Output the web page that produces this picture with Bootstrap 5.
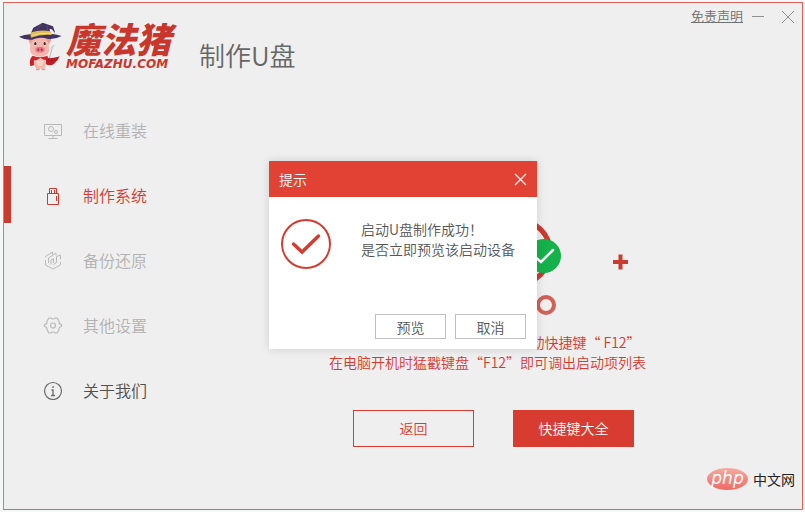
<!DOCTYPE html>
<html lang="zh-CN">
<head>
<meta charset="utf-8">
<meta name="viewport" content="width=device-width, initial-scale=1">
<title>魔法猪 - 制作U盘</title>
<link href="https://cdn.jsdelivr.net/npm/bootstrap@5.3.0/dist/css/bootstrap.min.css" rel="stylesheet">
<style>
  body { background: #f6f7f7; color: #555; font: 350 14px/20px "Noto Sans CJK SC", sans-serif; padding: 2px 2px 2px 3px; }
  .app-window { min-height: calc(100vh - 4px); background: #efefef; border: 1px solid #e0635b; border-left-color: #dc7770; }
  .app-header { height: 94px; padding-left: 14px; }
  .brand-mark { width: 45px; height: 50px; margin-top: 18px; }
  .brand-words { color: #c9372c; font-style: italic; font-weight: 900; margin: 18px 0 0 3px; width: 133px; }
  .brand-cn { font-size: 35px; line-height: 34px; }
  .brand-en { font-family: "DejaVu Sans", sans-serif; font-weight: 700; font-size: 12px; line-height: 18px; }
  .page-title { color: #666; font-size: 26px; line-height: 36px; font-weight: 350; margin-top: 34px; }
  .window-tools { padding: 3px 7px 0 0; font-size: 13px; }
  .window-tools a { color: #707070; }
  .icon-button { background: none; border: 0; padding: 0; display: flex; }
  .side-nav { width: 181px; }
  .side-nav .nav-link { height: 65px; margin: 0; padding: 0 0 0 32px; color: #b2b2b2; font-size: 16px; border-left: 7px solid transparent; position: relative; }
  .side-nav .nav-link svg { width: 20px; height: 20px; margin-right: 20px; flex: none; }
  .side-nav .nav-link.active { color: #d83a2e; }
  .side-nav .nav-link.active::before { content: ""; position: absolute; left: -7px; top: 4px; bottom: 4px; width: 7px; background: #cb3a2f; }
  .side-nav .nav-link.about { color: #505050; }
  .stage { padding-top: 115px; }
  .stage-art { width: 301px; height: 108px; }
  .hint { color: #d83a2e; margin: 12px 12px 38px 0; }
  .hint-key { padding-left: 196px; }
  .action { width: 121px; height: 37px; border-radius: 0; font-size: 14px; font-weight: 350; padding: 0; border: 1px solid #d83c30; color: #d83a2e; }
  .action-fill { background: #d83c30; color: #fff; }
  .actions { gap: 39px; }
  .site-mark { padding: 0 7px 19px 0; gap: 5px; color: #222; line-height: 22px; font-weight: 400; }
  .site-pill { width: 41px; height: 22px; border-radius: 50%; color: #fff; background: linear-gradient(#f6aaa0, #ee6a64); font: italic 17px/20px "DejaVu Sans", sans-serif; text-align: center; }
  .overlay { position: absolute; inset: 0; padding-bottom: 2px; pointer-events: none; }
  .prompt { width: 268px; background: #fff; box-shadow: 0 0 9px rgba(0,0,0,.14); pointer-events: auto; }
  .prompt-head { height: 36px; background: #e14234; color: #fff; padding: 0 10px; }
  .prompt-head h2 { font-size: 14px; line-height: 20px; font-weight: 350; }
  .prompt-body { padding: 22px 12px 0; gap: 30px; height: 117px; }
  .prompt-foot { gap: 9px; padding: 0 11px 10px 0; }
  .prompt-button { width: 71px; height: 25px; padding: 0; border: 1px solid #bfbfbf; border-radius: 0; font-size: 14px; line-height: 20px; font-weight: 350; color: #555; background: #fff; }
</style>
<script src="https://cdn.jsdelivr.net/npm/bootstrap@5.3.0/dist/js/bootstrap.bundle.min.js"></script>
</head>
<body>
<div class="app-window position-relative d-flex flex-column">
  <header class="app-header d-flex align-items-start">
    <svg class="brand-mark" viewBox="24 20 135 150" aria-hidden="true">
      <path d="M66 126q-10 14-5 29q8 1 13-5l1-23z" fill="#c61f26"/>
      <path d="M104 128q18 9 45-2q-5 12-13 18q-5 9-16 9q-9 1-16-7z" fill="#c01e27"/>
      <path d="M110 134l34-4M112 140l24 0" stroke="#8d1721" stroke-width="1.5" fill="none"/>
      <path d="M74 127q-7 22 3 32l3 7h9l2-5 3 5h9l2-9q7-14-1-31z" fill="#f1b8ac"/>
      <ellipse cx="90" cy="142" rx="11" ry="14" fill="#f8d3c5"/>
      <path d="M68 124q20 9 44 0l3 9q-7 5-14 3l-10-5-9 5q-8 4-17-2z" fill="#cf242b"/>
      <path d="M56 67q-3 14 5 25q-5 25 11 31q18 7 35 0q15-7 9-31q9-11 8-27q-34 11-68 2z" fill="#f5b6ad"/>
      <path d="M57 69q-1 12 6 18l7-13zM124 66q1 13-8 20l-8-13z" fill="#e99a94"/>
      <ellipse cx="76" cy="88" rx="5" ry="6" fill="#fff"/><ellipse cx="104" cy="88" rx="5" ry="6" fill="#fff"/>
      <ellipse cx="76" cy="88" rx="3.7" ry="5" fill="#332626"/><ellipse cx="104" cy="88" rx="3.7" ry="5" fill="#332626"/>
      <ellipse cx="90" cy="106" rx="14" ry="8.5" fill="#ea7582"/>
      <ellipse cx="85" cy="106" rx="2.4" ry="3.5" fill="#8b2c3e"/><ellipse cx="95" cy="106" rx="2.4" ry="3.5" fill="#8b2c3e"/>
      <path d="M27 67q16-6 33-7l60-2q18 1 35 7q-20 11-43 8q-22-7-46 3q-23 1-39-9z" fill="#41345f"/>
      <path d="M61 62q5-14 9-22l28-15 31 11 7 21-11-12-6-2 2 20q-30-5-60-1z" fill="#41345f"/>
      <path d="M96 27l-16 21M110 31l4 18" stroke="#665580" stroke-width="2" fill="none"/>
      <path d="M64 54q27-9 58-3l3 11q-33-3-62 8q-4-7 1-16z" fill="#dfbf55"/>
      <path d="M66 63q25-8 56-6" stroke="#f4df92" stroke-width="3" fill="none"/>
      <path d="M133 93q-10 4-7 11l-8 27" stroke="#9b9999" stroke-width="2" fill="none"/>
      <path d="M78 166h10M96 166h10" stroke="#d7928a" stroke-width="3"/>
    </svg>
    <div class="brand-words">
      <div class="brand-cn">魔法猪</div>
      <div class="brand-en">MOFAZHU.COM</div>
    </div>
    <h1 class="page-title mb-0">制作U盘</h1>
    <div class="window-tools d-flex align-items-center ms-auto">
      <a href="#">免责声明</a>
      <button class="icon-button ms-2" type="button" aria-label="最小化">
        <svg width="14" height="14" viewBox="0 0 14 14"><path d="M1 7.5h12" stroke="#909090"/></svg>
      </button>
      <button class="icon-button ms-3" type="button" aria-label="关闭">
        <svg width="14" height="14" viewBox="0 0 14 14"><path d="M1 2l12 12M13 2L1 14" stroke="#909090"/></svg>
      </button>
    </div>
  </header>

  <div class="d-flex">
    <nav class="side-nav nav flex-column flex-shrink-0" aria-label="主菜单">
      <a class="nav-link d-flex align-items-center" href="#">
        <svg viewBox="0 0 20 20" fill="none" stroke="#b9b9b9"><path d="M1.500 4.500h17v11h-17zM10 15.500v3M5.500 18.500h9"/><circle cx="8" cy="9" r="2.500"/><circle cx="13" cy="12" r="1.500"/></svg>
        在线重装</a>
      <a class="nav-link active d-flex align-items-center" href="#" aria-current="page">
        <svg viewBox="0 0 20 20" fill="none" stroke="#cf3a30"><path d="M4.500 8.500h11v11h-11zM6.500 8.500v-5h7v5M8.500 5v3M11.500 5v3M13.500 11v5"/></svg>
        制作系统</a>
      <a class="nav-link d-flex align-items-center" href="#">
        <svg viewBox="0 0 20 20" fill="none" stroke="#b9b9b9"><path d="M2.500 10v5l7.500 4 7.500-4v-3M17.500 9.500V5l-4 1.500v6l-3 2M2.500 7.500v-1l7-4.500v2.500M5.500 13V8l7.500-5v2.500M8 14.500V10l2.500-1.500V13"/></svg>
        备份还原</a>
      <a class="nav-link d-flex align-items-center" href="#">
        <svg viewBox="0 0 20 20" fill="none" stroke="#b9b9b9" stroke-width="1.200" stroke-linejoin="round"><path d="M6 3h1.500q2.500 2 5 0H14l2 3q-.5 3 2.500 3.500v2q-3 .5-2.500 3.500l-2 3h-1.500q-2.500-2-5 0H6l-2-3q.5-3-2.500-3.500v-2Q4.500 9 4 6z"/><circle cx="10" cy="10.500" r="2.500"/></svg>
        其他设置</a>
      <a class="nav-link about d-flex align-items-center" href="#">
        <svg viewBox="0 0 20 20" fill="none" stroke="#6b6b6b"><circle cx="10" cy="11" r="8.500" stroke-width="1.200"/><path d="M10 6v2M8.500 10H10v5.500M8 15.500h4" stroke-width="1.300"/></svg>
        关于我们</a>
    </nav>

    <main class="stage flex-grow-1 d-flex flex-column align-items-center">
      <svg class="stage-art" viewBox="343 212 301 108" aria-hidden="true">
        <circle cx="518" cy="252" r="32" fill="none" stroke="#c93a2f" stroke-width="5"/>
        <circle cx="544" cy="256" r="17" fill="#15b14b"/>
        <path d="M534 256l7 6 12-12" fill="none" stroke="#fff" stroke-width="2.500" stroke-linecap="round"/>
        <circle cx="546" cy="305" r="8" fill="none" stroke="#d16156" stroke-width="4"/>
        <path d="M613 262h15M620.500 254.500v15" stroke="#c93a2f" stroke-width="4"/>
      </svg>
      <p class="hint text-center"><span class="hint-key">动快捷键“ F12”</span><br>在电脑开机时猛戳键盘“F12”即可调出启动项列表</p>
      <div class="actions d-flex">
        <button class="action btn" type="button">返回</button>
        <button class="action action-fill btn" type="button">快捷键大全</button>
      </div>
    </main>
  </div>

  <footer class="site-mark d-flex justify-content-end align-items-center mt-auto">
    <span class="site-pill">php</span><span>中文网</span>
  </footer>

  <div class="overlay d-flex align-items-center justify-content-center">
    <section class="prompt" role="dialog" aria-labelledby="prompt-title">
      <div class="prompt-head d-flex align-items-center justify-content-between">
        <h2 id="prompt-title" class="mb-0">提示</h2>
        <button class="icon-button" type="button" aria-label="关闭提示">
          <svg width="13" height="13" viewBox="0 0 13 13"><path d="M1 1l11 11M12 1L1 12" stroke="#fff" stroke-width="1.200"/></svg>
        </button>
      </div>
      <div class="prompt-body d-flex align-items-start">
        <svg class="flex-shrink-0" width="50" height="50" viewBox="0 0 50 50" fill="none" stroke="#d43c30" aria-hidden="true"><circle cx="25" cy="25" r="24" stroke-width="2"/><path d="M12.500 25l8.500 8L37.500 17" stroke-width="3.500" stroke-linecap="round"/></svg>
        <p class="mb-0 text-nowrap">启动U盘制作成功！<br>是否立即预览该启动设备</p>
      </div>
      <div class="prompt-foot d-flex justify-content-end">
        <button class="prompt-button btn" type="button">预览</button>
        <button class="prompt-button btn" type="button">取消</button>
      </div>
    </section>
  </div>
</div>
</body>
</html>
